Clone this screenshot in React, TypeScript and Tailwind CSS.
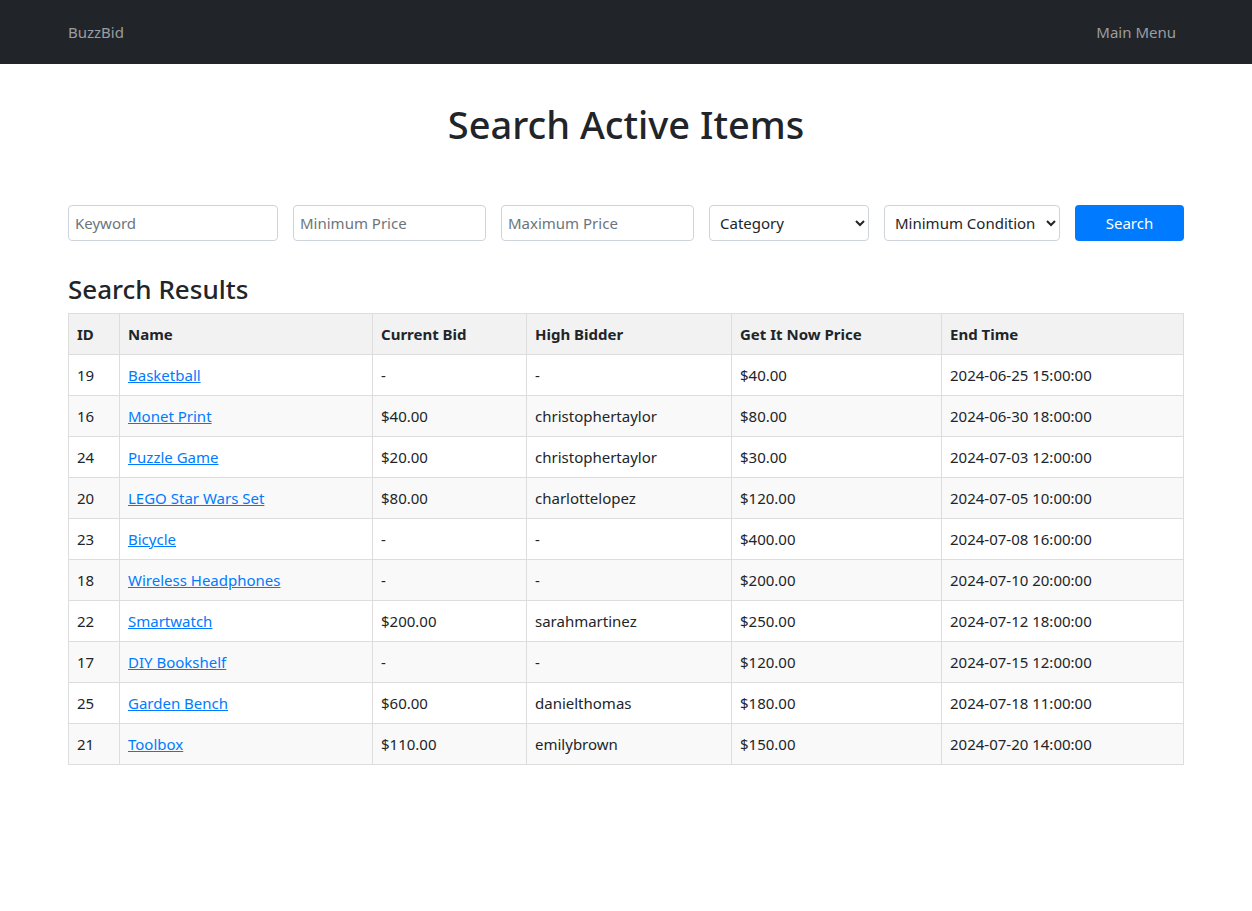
import React from "react";

const rows = [
  ["19", "Basketball", "-", "-", "$40.00", "2024-06-25 15:00:00"],
  ["16", "Monet Print", "$40.00", "christophertaylor", "$80.00", "2024-06-30 18:00:00"],
  ["24", "Puzzle Game", "$20.00", "christophertaylor", "$30.00", "2024-07-03 12:00:00"],
  ["20", "LEGO Star Wars Set", "$80.00", "charlottelopez", "$120.00", "2024-07-05 10:00:00"],
  ["23", "Bicycle", "-", "-", "$400.00", "2024-07-08 16:00:00"],
  ["18", "Wireless Headphones", "-", "-", "$200.00", "2024-07-10 20:00:00"],
  ["22", "Smartwatch", "$200.00", "sarahmartinez", "$250.00", "2024-07-12 18:00:00"],
  ["17", "DIY Bookshelf", "-", "-", "$120.00", "2024-07-15 12:00:00"],
  ["25", "Garden Bench", "$60.00", "danielthomas", "$180.00", "2024-07-18 11:00:00"],
  ["21", "Toolbox", "$110.00", "emilybrown", "$150.00", "2024-07-20 14:00:00"],
];

const font = { fontFamily: '"Noto Sans", "Open Sans", sans-serif' };

export default function App() {
  return (
    <div className="min-h-[911px] bg-white text-[#212529]" style={font}>
      <nav className="h-16 bg-[#212529] flex items-center justify-between px-[68px]">
        <span className="text-[15px] text-[#9a9da1]">BuzzBid</span>
        <span className="text-[15px] text-[#9a9da1] pr-2">Main Menu</span>
      </nav>
      <div className="px-[68px]">
        <h1 className="text-center text-[38px] font-medium leading-[48px] mt-[36px] mb-[57px]">Search Active Items</h1>
        <div className="flex gap-[15px] h-9">
          <input className="w-[210px] h-9 border border-[#ced4da] rounded px-[6px] text-[15px] placeholder-[#6c757d]" placeholder="Keyword" />
          <input className="w-[193px] h-9 border border-[#ced4da] rounded px-[6px] text-[15px] placeholder-[#6c757d]" placeholder="Minimum Price" />
          <input className="w-[193px] h-9 border border-[#ced4da] rounded px-[6px] text-[15px] placeholder-[#6c757d]" placeholder="Maximum Price" />
          <select className="w-[160px] h-9 border border-[#ced4da] rounded px-[6px] text-[15px] bg-white text-[#212529]">
            <option>Category</option>
          </select>
          <select className="w-[176px] h-9 border border-[#ced4da] rounded px-[6px] text-[15px] bg-white text-[#212529]">
            <option>Minimum Condition</option>
          </select>
          <button className="w-[109px] h-9 rounded bg-[#007bff] text-white text-[15px]">Search</button>
        </div>
        <h2 className="text-[26px] font-medium leading-[32px] mt-[32px] mb-[8px]">Search Results</h2>
        <table className="w-[1115px] border-collapse text-[15px] table-fixed">
          <colgroup>
            <col className="w-[51px]" />
            <col className="w-[253px]" />
            <col className="w-[154px]" />
            <col className="w-[205px]" />
            <col className="w-[210px]" />
            <col className="w-[242px]" />
          </colgroup>
          <thead>
            <tr className="bg-[#f2f2f2] h-[41px]">
              {["ID", "Name", "Current Bid", "High Bidder", "Get It Now Price", "End Time"].map((h) => (
                <th key={h} className="border border-[#dddddd] px-2 text-left font-bold">{h}</th>
              ))}
            </tr>
          </thead>
          <tbody>
            {rows.map((r, i) => (
              <tr key={r[0]} className={"h-[41px] " + (i % 2 === 1 ? "bg-[#f9f9f9]" : "bg-white")}>
                <td className="border border-[#dddddd] px-2">{r[0]}</td>
                <td className="border border-[#dddddd] px-2">
                  <a href="#" className="text-[#007bff] underline">{r[1]}</a>
                </td>
                <td className="border border-[#dddddd] px-2">{r[2]}</td>
                <td className="border border-[#dddddd] px-2">{r[3]}</td>
                <td className="border border-[#dddddd] px-2">{r[4]}</td>
                <td className="border border-[#dddddd] px-2">{r[5]}</td>
              </tr>
            ))}
          </tbody>
        </table>
      </div>
    </div>
  );
}
